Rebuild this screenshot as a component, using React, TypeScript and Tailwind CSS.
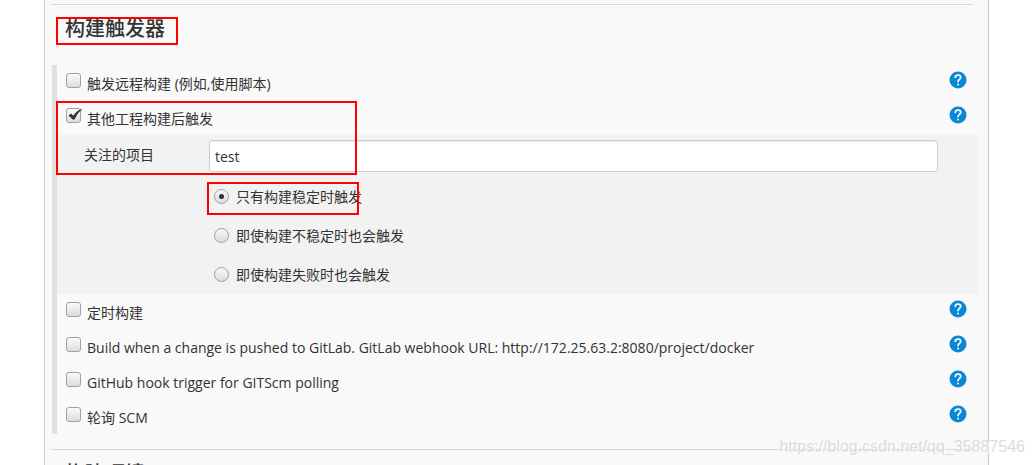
import type { ReactNode } from "react";

const FONT = "font-['Open_Sans','Noto_Sans_CJK_SC',sans-serif]";

function HelpButton({ topic }: { topic: string }) {
  return (
    <button type="button" aria-label={`Help: ${topic}`} className="mt-1.5 h-[18px] w-[18px] shrink-0">
      <svg viewBox="0 0 18 18" className="h-[18px] w-[18px]">
        <circle cx="9" cy="9" r="8.5" fill="#0a88d6" />
        <path
          d="M6.3 7V6.6C6.3 5 7.4 4 9 4s2.7 1 2.7 2.4c0 1.9-2.6 2.1-2.6 4.2v.6"
          fill="none"
          stroke="#fff"
          strokeWidth="1.7"
        />
        <rect x="8.2" y="12.7" width="1.7" height="1.7" fill="#fff" />
      </svg>
    </button>
  );
}

function Checkbox({ id, checked }: { id: string; checked?: boolean }) {
  return (
    <span className="relative mt-2 h-[15px] w-[15px] shrink-0">
      <input
        id={id}
        type="checkbox"
        defaultChecked={checked}
        className="peer block h-[15px] w-[15px] appearance-none rounded-[3px] border border-[#a0a0a0] bg-linear-to-b from-[#fafafa] to-[#dcdcdc]"
      />
      <svg viewBox="0 0 16 15" className="pointer-events-none absolute top-0 left-0 hidden h-[15px] w-4 peer-checked:block">
        <path d="M2.6 7.4 5 5.4 7.2 7.8C9.2 5 11.8 2.4 15 1L16 1.6C12.8 4 10.4 7.2 8.6 11.6H6.6Z" fill="#2e3436" />
      </svg>
    </span>
  );
}

function TriggerRow({ id, label, checked }: { id: string; label: string; checked?: boolean }) {
  return (
    <div className="flex h-[35px] items-start pr-[11px] pl-[9px]">
      <Checkbox id={id} checked={checked} />
      <label htmlFor={id} className="mt-[9px] ml-1.5 flex-1 leading-5">
        {label}
      </label>
      <HelpButton topic={label} />
    </div>
  );
}

function RadioRow({ id, label, checked }: { id: string; label: string; checked?: boolean }) {
  return (
    <div className="flex h-[39px] items-center gap-[7px]">
      <span className="relative h-[15px] w-[15px]">
        <input
          id={id}
          type="radio"
          name="threshold"
          defaultChecked={checked}
          className="peer block h-[15px] w-[15px] appearance-none rounded-full border border-[#a0a0a0] bg-linear-to-b from-[#fafafa] to-[#dcdcdc]"
        />
        <span className="pointer-events-none absolute inset-[5px] hidden rounded-full bg-[#2e3436] peer-checked:block" />
      </span>
      <label htmlFor={id} className="leading-5">
        {label}
      </label>
    </div>
  );
}

function Section({ title, children }: { title: string; children?: ReactNode }) {
  return (
    <section>
      <hr className="mr-[15px] ml-1.5 border-[#d9d9d9]" />
      <h2 className="h-[60px] pt-2 pl-5 text-xl leading-8 font-medium">{title}</h2>
      {children}
    </section>
  );
}

export default function App() {
  return (
    <div className={`relative h-screen overflow-hidden bg-white text-sm text-[#333] ${FONT}`}>
      <main className="relative mr-[45px] ml-11 min-h-full border-x border-[#c8c8c8] bg-[#f9f9f9] pt-1">
        <Section title="构建触发器">
          <div className="mr-2.5 mb-[15px] ml-[7px] border-l-[5px] border-[#e0e0e0]">
            <TriggerRow id="remote" label="触发远程构建 (例如,使用脚本)" />
            <TriggerRow id="upstream" label="其他工程构建后触发" checked />
            <div className="grid grid-cols-[125px_1fr] bg-[#f2f2f2] pt-[5px] pr-10 pl-[27px]">
              <label htmlFor="projects" className="pt-[5px] leading-5">
                关注的项目
              </label>
              <input
                id="projects"
                type="text"
                defaultValue="test"
                className="mb-[5px] h-8 w-full rounded-[3px] border border-[#ccc] bg-white px-[5px] text-sm shadow-[inset_0_1px_1px_#00000013]"
              />
              <div className="col-start-2 pl-[5px]">
                <RadioRow id="stable" label="只有构建稳定时触发" checked />
                <RadioRow id="unstable" label="即使构建不稳定时也会触发" />
                <RadioRow id="failed" label="即使构建失败时也会触发" />
              </div>
            </div>
            <TriggerRow id="timer" label="定时构建" />
            <TriggerRow
              id="gitlab"
              label="Build when a change is pushed to GitLab. GitLab webhook URL: http://172.25.63.2:8080/project/docker"
            />
            <TriggerRow id="github" label="GitHub hook trigger for GITScm polling" />
            <TriggerRow id="scm" label="轮询 SCM" />
          </div>
        </Section>
        <Section title="构建环境" />

        {/* Highlight frames */}
        <div className="pointer-events-none absolute top-[17px] left-[11px] h-7 w-[122px] border-2 border-[#ff0000]" />
        <div className="pointer-events-none absolute top-[101px] left-[11px] h-[74px] w-[301px] border-2 border-[#ff0000]" />
        <div className="pointer-events-none absolute top-[182px] left-[162px] h-[33px] w-[152px] border-2 border-[#ff0000]" />
      </main>

      {/* Watermark */}
      <p className="pointer-events-none absolute right-[9px] bottom-1.5 font-['Liberation_Sans',sans-serif] text-base text-[#dcdcdc] [text-shadow:1px_1px_0_#fff]">
        https://blog.csdn.net/qq_35887546
      </p>
    </div>
  );
}
